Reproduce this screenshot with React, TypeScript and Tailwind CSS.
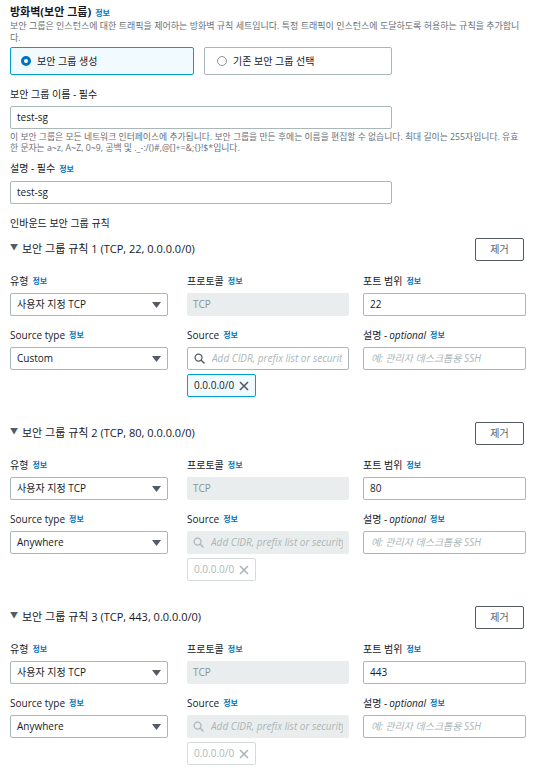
import React from 'react';

const font = { fontFamily: '"Open Sans", "Noto Sans CJK KR", sans-serif' };

const Info = () => <span className="ml-1 text-[8px] font-bold text-[#0073bb]">정보</span>;

const Caret = () => (
  <svg width="9" height="6" viewBox="0 0 9 6" className="shrink-0">
    <path d="M0 0h9L4.5 6z" fill="#545b64" />
  </svg>
);

const Search = ({ color }: { color: string }) => (
  <svg width="11" height="11" viewBox="0 0 12 12" className="shrink-0">
    <circle cx="5" cy="5" r="3.8" fill="none" stroke={color} strokeWidth="1.4" />
    <path d="M7.8 7.8L11 11" stroke={color} strokeWidth="1.5" strokeLinecap="round" />
  </svg>
);

const Cross = ({ color }: { color: string }) => (
  <svg width="10" height="10" viewBox="0 0 10 10" className="shrink-0">
    <path d="M1 1l8 8M9 1L1 9" stroke={color} strokeWidth="1.6" />
  </svg>
);

type Rule = { n: number; port: string; sourceType: string; custom: boolean };

const rules: Rule[] = [
  { n: 1, port: '22', sourceType: 'Custom', custom: true },
  { n: 2, port: '80', sourceType: 'Anywhere', custom: false },
  { n: 3, port: '443', sourceType: 'Anywhere', custom: false },
];

const Label = ({ children }: { children: React.ReactNode }) => (
  <div className="h-[14px] flex items-center text-[10px] text-[#16191f] mb-[5px]">{children}</div>
);

function RuleBlock({ r }: { r: Rule }) {
  return (
    <div className="mb-[25px]">
      <div className="flex items-center justify-between pr-[12px] h-[23px]">
        <div className="flex items-center text-[11px] text-[#16191f]">
          <span className="text-[8px] text-[#545b64] mr-[4px] -mt-[6px]">▼</span>
          보안 그룹 규칙 {r.n} (TCP, {r.port}, 0.0.0.0/0)
        </div>
        <button className="w-[49px] h-[23px] border border-[#545b64] rounded-[2px] text-[10px] text-[#545b64] bg-white">
          제거
        </button>
      </div>
      <div className="flex mt-[13px]">
        <div className="w-[158px]">
          <Label>유형<Info /></Label>
          <div className="h-[23px] border border-[#aab7b8] rounded-[2px] flex items-center justify-between px-[6px] text-[10px] text-[#16191f]">
            <span>사용자 지정 TCP</span>
            <Caret />
          </div>
        </div>
        <div className="w-[162px] ml-[19px]">
          <Label>프로토콜<Info /></Label>
          <div className="h-[23px] bg-[#eaeded] rounded-[2px] flex items-center px-[6px] text-[10px] text-[#879596]">TCP</div>
        </div>
        <div className="w-[163px] ml-[14px]">
          <Label>포트 범위<Info /></Label>
          <div className="h-[23px] border border-[#aab7b8] rounded-[2px] flex items-center px-[6px] text-[10px] text-[#16191f]">
            {r.port}
          </div>
        </div>
      </div>
      <div className="flex mt-[12px]">
        <div className="w-[158px]">
          <Label>Source type<Info /></Label>
          <div className="h-[23px] border border-[#aab7b8] rounded-[2px] flex items-center justify-between px-[6px] text-[10px] text-[#16191f]">
            <span>{r.sourceType}</span>
            <Caret />
          </div>
        </div>
        <div className="w-[162px] ml-[19px]">
          <Label>Source<Info /></Label>
          <div
            className={
              r.custom
                ? 'h-[23px] border border-[#aab7b8] rounded-[2px] flex items-center px-[6px] gap-[7px]'
                : 'h-[23px] bg-[#eaeded] rounded-[2px] flex items-center px-[6px] gap-[7px]'
            }
          >
            <Search color={r.custom ? '#545b64' : '#aab7b8'} />
            <span className="flex-1 min-w-0 overflow-hidden whitespace-nowrap text-[10px] italic text-[#aab7b8]">
              Add CIDR, prefix list or security group
            </span>
          </div>
          <div
            className={
              r.custom
                ? 'mt-[4px] w-[69px] h-[23px] border border-[#00a1c9] bg-[#f1faff] rounded-[2px] flex items-center justify-between px-[6px] text-[10px] text-[#16191f]'
                : 'mt-[4px] w-[69px] h-[23px] border border-[#d5dbdb] bg-white rounded-[2px] flex items-center justify-between px-[6px] text-[10px] text-[#aab7b8]'
            }
          >
            <span>0.0.0.0/0</span>
            <Cross color={r.custom ? '#545b64' : '#aab7b8'} />
          </div>
        </div>
        <div className="w-[163px] ml-[14px]">
          <Label>
            설명 - <i className="ml-[2px]">optional</i>
            <Info />
          </Label>
          <div className="h-[23px] border border-[#aab7b8] rounded-[2px] flex items-center px-[7px] text-[10px] italic text-[#aab7b8]">
            예: 관리자 데스크톱용 SSH
          </div>
        </div>
      </div>
    </div>
  );
}

export default function App() {
  return (
    <div className="w-[536px] min-h-[777px] bg-white pl-[10px] pt-[5px]" style={font}>
      <div className="text-[11px] font-bold text-[#16191f] leading-[14px]">
        방화벽(보안 그룹)<Info />
      </div>
      <p className="text-[9px] text-[#687078] leading-[12px] pr-[10px]">
        보안 그룹은 인스턴스에 대한 트래픽을 제어하는 방화벽 규칙 세트입니다. 특정 트래픽이 인스턴스에 도달하도록 허용하는 규칙을 추가합니다.
      </p>
      <div className="flex gap-[10px] mt-[3px]">
        <div className="w-[184px] h-[28px] border border-[#00a1c9] bg-[#f1faff] rounded-[2px] flex items-center pl-[10px] gap-[6px] text-[10px] text-[#16191f]">
          <span className="w-[10px] h-[10px] rounded-full border-[3px] border-[#0073bb] bg-white" />
          보안 그룹 생성
        </div>
        <div className="w-[188px] h-[28px] border border-[#aab7b8] rounded-[2px] flex items-center pl-[12px] gap-[6px] text-[10px] text-[#16191f]">
          <span className="w-[10px] h-[10px] rounded-full border border-[#879596] bg-white" />
          기존 보안 그룹 선택
        </div>
      </div>

      <div className="mt-[12px] text-[10px] text-[#16191f] leading-[14px]">보안 그룹 이름 - 필수</div>
      <div className="mt-[5px] w-[382px] h-[23px] border border-[#aab7b8] rounded-[2px] flex items-center px-[6px] text-[10px] text-[#16191f]">
        test-sg
      </div>
      <p className="mt-[3px] text-[8.8px] text-[#687078] leading-[11px] pr-[10px]">
        이 보안 그룹은 모든 네트워크 인터페이스에 추가됩니다. 보안 그룹을 만든 후에는 이름을 편집할 수 없습니다. 최대 길이는 255자입니다. 유효한 문자는 a~z, A~Z, 0~9, 공백 및 ._-:/()#,@[]+=&;{'{}'}!$*입니다.
      </p>

      <div className="mt-[7px] text-[10px] text-[#16191f] leading-[14px]">
        설명 - 필수<Info />
      </div>
      <div className="mt-[5px] w-[382px] h-[23px] border border-[#aab7b8] rounded-[2px] flex items-center px-[6px] text-[10px] text-[#16191f]">
        test-sg
      </div>

      <div className="mt-[12px] text-[10px] text-[#16191f] leading-[14px]">인바운드 보안 그룹 규칙</div>
      <div className="mt-[8px]">
        {rules.map((r) => (
          <RuleBlock key={r.n} r={r} />
        ))}
      </div>
    </div>
  );
}
